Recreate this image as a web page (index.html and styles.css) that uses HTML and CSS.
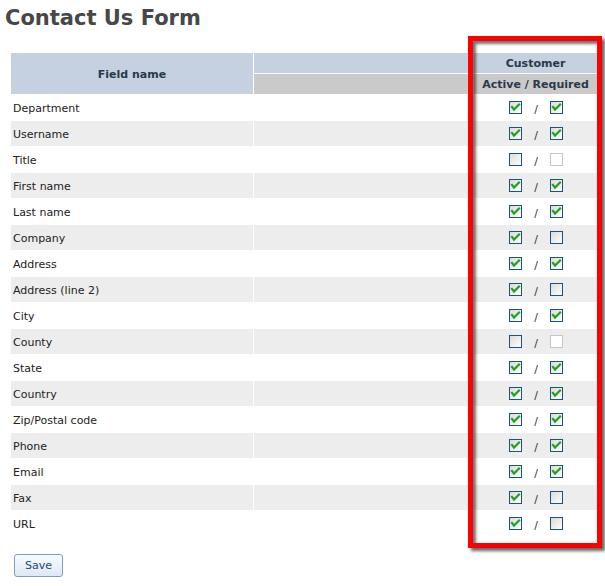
FILE: index.html
```html
<!DOCTYPE html>
<html>
<head>
<meta charset="utf-8">
<title>Contact Us Form</title>
<link rel="stylesheet" href="styles.css">
</head>
<body>
<svg class="defs" width="0" height="0" aria-hidden="true">
  <symbol id="tick" viewBox="0 0 11 11">
    <path d="M2 5 L4 7.5 L9 2.5" fill="none" stroke="#21a121" stroke-width="2.2" stroke-linecap="square"/>
  </symbol>
</svg>
<div class="page">
  <h1 class="title">Contact Us Form</h1>
  <table class="grid">
    <colgroup>
      <col class="c-name"><col class="c-mid"><col class="c-cust">
    </colgroup>
    <thead>
      <tr class="h1row">
        <th rowspan="2" class="h-name">Field name</th>
        <th class="h-blue"></th>
        <th class="h-blue">Customer</th>
      </tr>
      <tr class="h2row">
        <th class="h-gray"></th>
        <th class="h-gray">Active / Required</th>
      </tr>
    </thead>
    <tbody>
      <tr><td class="lbl">Department</td><td></td><td><div class="pair"><span class="cb"><svg><use href="#tick"/></svg></span><span class="sl">/</span><span class="cb"><svg><use href="#tick"/></svg></span></div></td></tr>
      <tr class="alt"><td class="lbl">Username</td><td></td><td><div class="pair"><span class="cb"><svg><use href="#tick"/></svg></span><span class="sl">/</span><span class="cb"><svg><use href="#tick"/></svg></span></div></td></tr>
      <tr><td class="lbl">Title</td><td></td><td><div class="pair"><span class="cb"></span><span class="sl">/</span><span class="cb off"></span></div></td></tr>
      <tr class="alt"><td class="lbl">First name</td><td></td><td><div class="pair"><span class="cb"><svg><use href="#tick"/></svg></span><span class="sl">/</span><span class="cb"><svg><use href="#tick"/></svg></span></div></td></tr>
      <tr><td class="lbl">Last name</td><td></td><td><div class="pair"><span class="cb"><svg><use href="#tick"/></svg></span><span class="sl">/</span><span class="cb"><svg><use href="#tick"/></svg></span></div></td></tr>
      <tr class="alt"><td class="lbl">Company</td><td></td><td><div class="pair"><span class="cb"><svg><use href="#tick"/></svg></span><span class="sl">/</span><span class="cb"></span></div></td></tr>
      <tr><td class="lbl">Address</td><td></td><td><div class="pair"><span class="cb"><svg><use href="#tick"/></svg></span><span class="sl">/</span><span class="cb"><svg><use href="#tick"/></svg></span></div></td></tr>
      <tr class="alt"><td class="lbl">Address (line 2)</td><td></td><td><div class="pair"><span class="cb"><svg><use href="#tick"/></svg></span><span class="sl">/</span><span class="cb"></span></div></td></tr>
      <tr><td class="lbl">City</td><td></td><td><div class="pair"><span class="cb"><svg><use href="#tick"/></svg></span><span class="sl">/</span><span class="cb"><svg><use href="#tick"/></svg></span></div></td></tr>
      <tr class="alt"><td class="lbl">County</td><td></td><td><div class="pair"><span class="cb"></span><span class="sl">/</span><span class="cb off"></span></div></td></tr>
      <tr><td class="lbl">State</td><td></td><td><div class="pair"><span class="cb"><svg><use href="#tick"/></svg></span><span class="sl">/</span><span class="cb"><svg><use href="#tick"/></svg></span></div></td></tr>
      <tr class="alt"><td class="lbl">Country</td><td></td><td><div class="pair"><span class="cb"><svg><use href="#tick"/></svg></span><span class="sl">/</span><span class="cb"><svg><use href="#tick"/></svg></span></div></td></tr>
      <tr><td class="lbl">Zip/Postal code</td><td></td><td><div class="pair"><span class="cb"><svg><use href="#tick"/></svg></span><span class="sl">/</span><span class="cb"><svg><use href="#tick"/></svg></span></div></td></tr>
      <tr class="alt"><td class="lbl">Phone</td><td></td><td><div class="pair"><span class="cb"><svg><use href="#tick"/></svg></span><span class="sl">/</span><span class="cb"><svg><use href="#tick"/></svg></span></div></td></tr>
      <tr><td class="lbl">Email</td><td></td><td><div class="pair"><span class="cb"><svg><use href="#tick"/></svg></span><span class="sl">/</span><span class="cb"><svg><use href="#tick"/></svg></span></div></td></tr>
      <tr class="alt"><td class="lbl">Fax</td><td></td><td><div class="pair"><span class="cb"><svg><use href="#tick"/></svg></span><span class="sl">/</span><span class="cb"></span></div></td></tr>
      <tr><td class="lbl">URL</td><td></td><td><div class="pair"><span class="cb"><svg><use href="#tick"/></svg></span><span class="sl">/</span><span class="cb"></span></div></td></tr>
    </tbody>
  </table>
  <button class="save" type="button">Save</button>
  <div class="highlight"></div>
</div>
</body>
</html>
```
FILE: styles.css
```css
html, body {
  margin: 0;
  padding: 0;
  background: #fff;
}
.defs {
  position: absolute;
  width: 0;
  height: 0;
  overflow: hidden;
}
.page {
  position: relative;
  width: 605px;
  height: 586px;
  padding-top: 5px;
  box-sizing: border-box;
  font-family: "DejaVu Sans", Verdana, sans-serif;
  font-size: 11px;
  color: #222;
}
.title {
  margin: 0 0 21px 5px;
  font-size: 21px;
  line-height: 26px;
  font-weight: bold;
  color: #474747;
}
.grid {
  margin-left: 10px;
  border-collapse: separate;
  border-spacing: 1px;
  table-layout: fixed;
  width: 588px;
}
.c-name { width: 242px; }
.c-mid { width: 219px; }
.c-cust { width: 123px; }
.grid th {
  padding: 1px 0 0;
  height: 19px;
  font-weight: bold;
  font-size: 11px;
  color: #2a394a;
  text-align: center;
  vertical-align: middle;
  white-space: nowrap;
}
.h-name, .h-blue { background: #c5d0e0; }
.h-gray { background: #cacaca; }
.grid td {
  height: 25px;
  padding: 0;
  vertical-align: middle;
}
.grid td.lbl {
  padding: 2px 0 0 2px;
  height: 23px;
  color: #222;
}
.grid tr.alt td { background: #ededed; }
.pair {
  display: flex;
  justify-content: center;
  align-items: center;
  gap: 12px;
  padding-left: 1px;
}
.cb {
  display: block;
  width: 11px;
  height: 11px;
  border: 1px solid #1c5180;
  background: linear-gradient(135deg, #dcdcd7 0%, #f3f3ef 70%, #ffffff 100%);
}
.cb svg {
  display: block;
  width: 11px;
  height: 11px;
}
.cb.off {
  border-color: #c9c7ba;
  background: #fff;
}
.sl {
  display: block;
  padding-top: 5px;
  color: #333;
  line-height: 12px;
}
.save {
  display: block;
  margin: 17px 0 0 14px;
  width: 49px;
  height: 23px;
  padding: 0;
  border: 1px solid #7f9db9;
  border-radius: 3px;
  background: linear-gradient(#f7fbff, #dde9f6);
  font-family: "DejaVu Sans", Verdana, sans-serif;
  font-size: 11px;
  color: #224a78;
}
.highlight {
  position: absolute;
  left: 468px;
  top: 36px;
  width: 134px;
  height: 512px;
  box-sizing: border-box;
  border: 5px solid #ff0000;
  box-shadow: 3px 3px 3px rgba(0, 0, 0, 0.6), inset 3px 3px 3px rgba(0, 0, 0, 0.55);
  pointer-events: none;
}
```
